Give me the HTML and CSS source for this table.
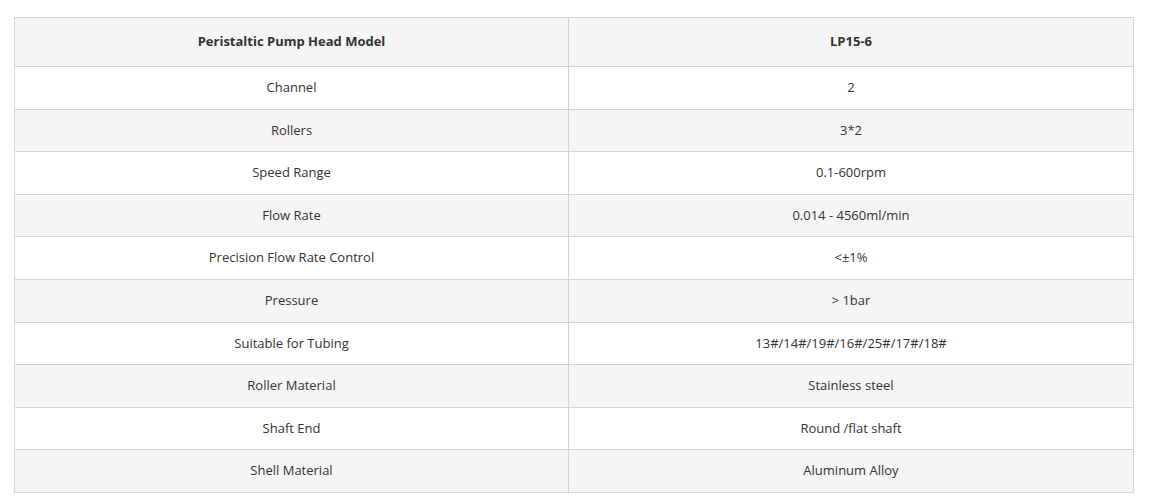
FILE: index.html
```html
<!DOCTYPE html>
<html>
<head>
<meta charset="utf-8">
<link rel="stylesheet" href="styles.css">
</head>
<body>
<div class="wrap">
<table class="spec">
<thead>
<tr><th class="c1">Peristaltic Pump Head Model</th><th>LP15-6</th></tr>
</thead>
<tbody>
<tr><td>Channel</td><td>2</td></tr>
<tr><td>Rollers</td><td>3*2</td></tr>
<tr><td>Speed Range</td><td>0.1-600rpm</td></tr>
<tr><td>Flow Rate</td><td>0.014 - 4560ml/min</td></tr>
<tr><td>Precision Flow Rate Control</td><td>&lt;±1%</td></tr>
<tr><td>Pressure</td><td>&gt; 1bar</td></tr>
<tr><td>Suitable for Tubing</td><td>13#/14#/19#/16#/25#/17#/18#</td></tr>
<tr><td>Roller Material</td><td>Stainless steel</td></tr>
<tr><td>Shaft End</td><td>Round /flat shaft</td></tr>
<tr><td>Shell Material</td><td>Aluminum Alloy</td></tr>
</tbody>
</table>
</div>
</body>
</html>
```

FILE: styles.css
```css
html, body {
  margin: 0;
  padding: 0;
  background: #ffffff;
}
.wrap {
  padding: 17px 15px 0 14px;
}
.spec {
  width: 1120px;
  border-collapse: collapse;
  table-layout: fixed;
  font-family: "Open Sans", "Liberation Sans", sans-serif;
  font-size: 13px;
  color: #333333;
}
.spec th, .spec td {
  border: 1px solid #d4d4d4;
  text-align: center;
  vertical-align: middle;
  line-height: 21.6px;
  padding: 10px 8px;
}
.spec th {
  font-weight: 700;
  padding: 13.2px 8px;
  background: #f5f5f5;
}
.spec .c1 {
  width: 537px;
}
.spec tbody tr:nth-child(even) td {
  background: #f5f5f5;
}
.spec tbody tr:nth-child(odd) td {
  background: #ffffff;
}
```
